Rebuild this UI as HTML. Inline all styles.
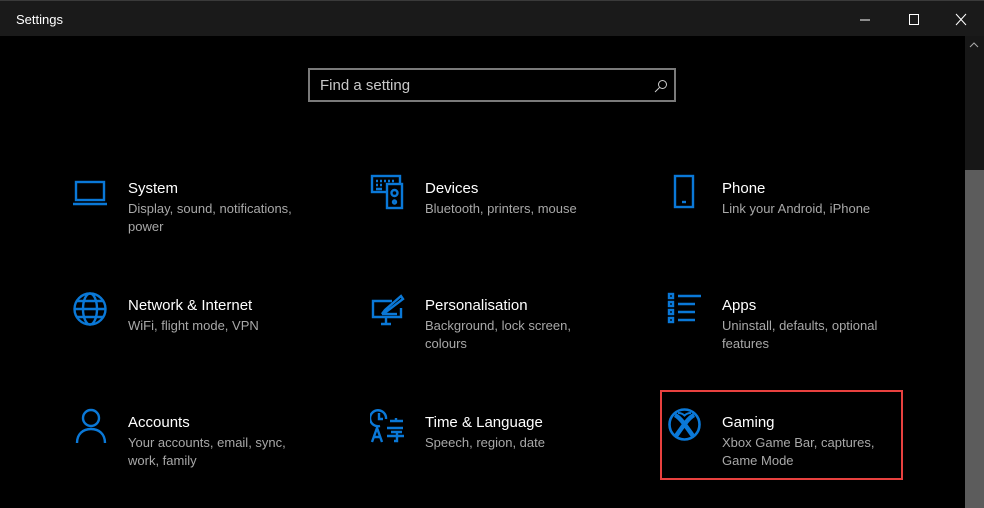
<!DOCTYPE html>
<html><head><style>
body{margin:0;width:984px;height:508px;background:#000;overflow:hidden;font-family:"Liberation Sans",sans-serif;position:relative}
.tb{position:absolute;left:0;top:0;width:984px;height:36px;background:#1a1a1a;border-top:1px solid #3a3a3a;box-sizing:border-box}
.tb .t{position:absolute;left:16px;top:11px;color:#fff;font-size:13px}
.sb{position:absolute;left:965px;top:36px;width:19px;height:472px;background:#171717}
.th{position:absolute;left:965px;top:170px;width:19px;height:338px;background:#5c5c5c}
.search{position:absolute;left:308px;top:68px;width:368px;height:34px;border:2px solid #7a7a7a;box-sizing:border-box}
.search span{position:absolute;left:10px;top:7px;color:#c8c8c8;font-size:15px}
.it{position:absolute}
.it .h{position:absolute;color:#fff;font-size:15px;white-space:nowrap;top:2px}
.it .d{position:absolute;color:#a8a8a8;font-size:13px;line-height:18px;width:180px}
svg{position:absolute}
.red{position:absolute;left:660px;top:390px;width:243px;height:90px;border:2px solid #e8413f;box-sizing:border-box}
</style></head><body>
<div class="tb"><div class="t">Settings</div>
<svg style="left:860px;top:12px" width="110" height="14"><line x1="0" y1="7" x2="10" y2="7" stroke="#fff"/><rect x="49.5" y="1.5" width="9" height="10" fill="none" stroke="#fff"/><path d="M96 1L106 12M106 1L96 12" stroke="#fff"/></svg>
</div>
<div class="sb"></div><div class="th"></div>
<svg style="left:967px;top:40px" width="14" height="10"><path d="M3 7L7 3L11 7" stroke="#aaa" fill="none"/></svg>
<div class="search"><span>Find a setting</span>
<svg style="left:344px;top:9px" width="14" height="14"><circle cx="8.5" cy="5.5" r="4" stroke="#ccc" fill="none"/><line x1="5.5" y1="8.5" x2="1" y2="13" stroke="#ccc"/></svg></div>

<!-- Row 1 -->
<svg style="left:72px;top:178px" width="38" height="30" stroke="#0a78d7" fill="none" stroke-width="2.4"><rect x="4" y="4" width="28" height="18"/><path d="M1 26H35"/></svg>
<div class="it" style="left:128px;top:178px"><div class="h">System</div><div class="d" style="top:22px">Display, sound, notifications, power</div></div>

<svg style="left:370px;top:174px" width="36" height="36" stroke="#0a78d7" fill="none" stroke-width="2.4"><rect x="2" y="2" width="28" height="16"/><rect x="17" y="10" width="15" height="24" fill="#000"/><circle cx="24.5" cy="19" r="3"/><circle cx="24.5" cy="28" r="1.5"/><path d="M6 7h2M10 7h2M14 7h2M18 7h2M22 7h2M6 11h2M10 11h2M6 15h6" /></svg>
<div class="it" style="left:425px;top:178px"><div class="h">Devices</div><div class="d" style="top:22px">Bluetooth, printers, mouse</div></div>

<svg style="left:672px;top:174px" width="24" height="36" stroke="#0a78d7" fill="none" stroke-width="2.4"><rect x="3" y="2" width="18" height="31"/><path d="M10 28h4"/></svg>
<div class="it" style="left:722px;top:178px"><div class="h">Phone</div><div class="d" style="top:22px">Link your Android, iPhone</div></div>

<!-- Row 2 -->
<svg style="left:72px;top:291px" width="36" height="36" stroke="#0a78d7" fill="none" stroke-width="2.4"><circle cx="18" cy="18" r="15.5"/><ellipse cx="18" cy="18" rx="7" ry="15.5"/><path d="M2.5 18H33.5M5 10H31M5 26H31"/></svg>
<div class="it" style="left:128px;top:295px"><div class="h">Network &amp; Internet</div><div class="d" style="top:22px">WiFi, flight mode, VPN</div></div>

<svg style="left:370px;top:294px" width="36" height="36" stroke="#0a78d7" fill="none" stroke-width="2.4"><path d="M22 7H3V23H31V14"/><path d="M11 30H21M16 23V30"/><path d="M31 2L15 16L12 20L16 18L33 5Z"/><path d="M12 20H27"/></svg>
<div class="it" style="left:425px;top:295px"><div class="h">Personalisation</div><div class="d" style="top:22px">Background, lock screen, colours</div></div>

<svg style="left:667px;top:292px" width="36" height="34" stroke="#0a78d7" fill="none" stroke-width="2.4"><rect x="2" y="2" width="4" height="4"/><rect x="2" y="10" width="4" height="4"/><rect x="2" y="18" width="4" height="4"/><rect x="2" y="26" width="4" height="4"/><path d="M11 4H34M11 12H28M11 20H28M11 28H28"/></svg>
<div class="it" style="left:722px;top:295px"><div class="h">Apps</div><div class="d" style="top:22px">Uninstall, defaults, optional features</div></div>

<!-- Row 3 -->
<svg style="left:74px;top:408px" width="34" height="36" stroke="#0a78d7" fill="none" stroke-width="2.4"><circle cx="17" cy="10" r="8"/><path d="M3 35C3 26 9 21 17 21S31 26 31 35"/></svg>
<div class="it" style="left:128px;top:412px"><div class="h">Accounts</div><div class="d" style="top:22px">Your accounts, email, sync, work, family</div></div>

<svg style="left:370px;top:408px" width="36" height="36" stroke="#0a78d7" fill="none" stroke-width="2.4"><path d="M16 11A8 8 0 1 0 10 18"/><path d="M9 5V11H13"/><path d="M2 34L7 20L12 34M4 29H10"/><path d="M20 13H33M26 10V14M17 20H33M21 24H32M27 24V33L24 33M17 28H34"/></svg>
<div class="it" style="left:425px;top:412px"><div class="h">Time &amp; Language</div><div class="d" style="top:22px">Speech, region, date</div></div>

<svg style="left:667px;top:407px" width="36" height="36"><circle cx="17.5" cy="17.5" r="15" fill="none" stroke="#0a78d7" stroke-width="2.6"/><path d="M8 8C14 11 21 22 26 29M27 8C21 11 14 22 9 29" stroke="#0a78d7" stroke-width="4.5" fill="none"/><path d="M11 6C14 6 16 7 17.5 8.5C19 7 21 6 24 6" stroke="#0a78d7" stroke-width="2" fill="none"/></svg>
<div class="it" style="left:722px;top:412px"><div class="h">Gaming</div><div class="d" style="top:22px">Xbox Game Bar, captures, Game Mode</div></div>
<div class="red"></div>
</body></html>
